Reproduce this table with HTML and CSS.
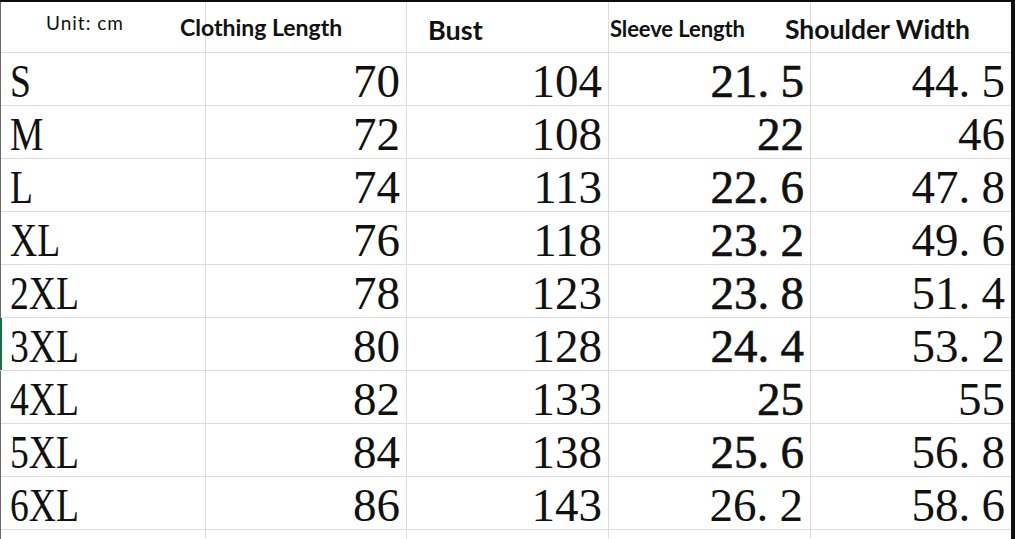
FILE: index.html
```html
<!DOCTYPE html>
<html>
<head>
<meta charset="utf-8">
<link rel="stylesheet" href="styles.css">
</head>
<body>
<div class="sheet">
  <div class="table">
    <div class="cell head head-1"><span class="unit">Unit: cm</span><span class="h h-cl">Clothing Length</span></div>
    <div class="cell head"></div>
    <div class="cell head head-3"><span class="h h-bust">Bust</span></div>
    <div class="cell head head-4"><span class="h h-sl">Sleeve Length</span><span class="h h-sw">Shoulder Width</span></div>
    <div class="cell head"></div>

    <div class="cell lab"><span>S</span></div><div class="cell num">70</div><div class="cell num">104</div><div class="cell num sl">21<span class="dot">.</span>5</div><div class="cell num">44<span class="dot">.</span>5</div>
    <div class="cell lab"><span>M</span></div><div class="cell num">72</div><div class="cell num">108</div><div class="cell num sl">22</div><div class="cell num">46</div>
    <div class="cell lab"><span>L</span></div><div class="cell num">74</div><div class="cell num">113</div><div class="cell num sl">22<span class="dot">.</span>6</div><div class="cell num">47<span class="dot">.</span>8</div>
    <div class="cell lab"><span>XL</span></div><div class="cell num">76</div><div class="cell num">118</div><div class="cell num sl">23<span class="dot">.</span>2</div><div class="cell num">49<span class="dot">.</span>6</div>
    <div class="cell lab"><span>2XL</span></div><div class="cell num">78</div><div class="cell num">123</div><div class="cell num sl">23<span class="dot">.</span>8</div><div class="cell num">51<span class="dot">.</span>4</div>
    <div class="cell lab mark"><span>3XL</span></div><div class="cell num">80</div><div class="cell num">128</div><div class="cell num sl">24<span class="dot">.</span>4</div><div class="cell num">53<span class="dot">.</span>2</div>
    <div class="cell lab"><span>4XL</span></div><div class="cell num">82</div><div class="cell num">133</div><div class="cell num sl">25</div><div class="cell num">55</div>
    <div class="cell lab"><span>5XL</span></div><div class="cell num">84</div><div class="cell num">138</div><div class="cell num sl">25<span class="dot">.</span>6</div><div class="cell num">56<span class="dot">.</span>8</div>
    <div class="cell lab"><span>6XL</span></div><div class="cell num">86</div><div class="cell num">143</div><div class="cell num last">26<span class="dot">.</span>2</div><div class="cell num">58<span class="dot">.</span>6</div>

    <div class="cell tail"></div><div class="cell tail"></div><div class="cell tail"></div><div class="cell tail"></div><div class="cell tail"></div>
  </div>
  <div class="edge"></div>
</div>
</body>
</html>
```
FILE: styles.css
```css
html, body {
  margin: 0;
  padding: 0;
  background: #ffffff;
}

.sheet {
  width: 1015px;
  height: 539px;
  box-sizing: border-box;
  border-top: 2px solid #0d0d0d;
  display: flex;
  overflow: hidden;
  background: #ffffff;
}

.table {
  width: 1011px;
  box-sizing: border-box;
  border-left: 1px solid #6a6a6a;
  display: grid;
  grid-template-columns: 205px 201px 202px 202px 200px;
  grid-template-rows: 51px repeat(9, 53px) 8px;
  color: #111111;
}

.edge {
  width: 4px;
  background: #101010;
}

.cell {
  border-right: 1px solid #dcdcdc;
  border-bottom: 1px solid #dcdcdc;
  white-space: nowrap;
  box-sizing: border-box;
}

.cell:nth-child(5n) {
  border-right: none;
}

.tail {
  border-bottom: none;
}

.head {
  display: flex;
  align-items: baseline;
  font-family: Lato, "Liberation Sans", sans-serif;
  line-height: 1;
  padding-top: 14px;
}

.head-1 {
  padding-left: 45px;
}

.unit {
  font-size: 19px;
  font-weight: 400;
  letter-spacing: 1px;
  position: relative;
  top: -6px;
}

.h {
  font-weight: 700;
}

.h-cl {
  font-size: 23px;
  margin-left: 56px;
}

.head-3 {
  padding-left: 21px;
}

.h-bust {
  font-size: 27px;
}

.head-4 {
  padding-left: 1px;
}

.h-sl {
  font-size: 22px;
  letter-spacing: -0.1px;
  position: relative;
  top: -2px;
}

.h-sw {
  font-size: 26.5px;
  margin-left: 40px;
}

.lab,
.num {
  font-family: "Liberation Serif", "Times New Roman", serif;
  font-size: 47px;
  line-height: 47px;
  padding-top: 5px;
}

.lab {
  padding-left: 9px;
}

.lab span {
  display: inline-block;
  transform: scaleX(0.8);
  transform-origin: left center;
}

.num {
  text-align: right;
  padding-right: 6px;
}

.sl {
  -webkit-text-stroke: 0.6px #111111;
}

.last {
  padding-right: 7px;
}

.dot {
  margin-right: 0.24em;
}

.mark {
  box-shadow: inset 2px 0 0 #1e6b48;
  margin-left: -1px;
  padding-left: 10px;
}
```
